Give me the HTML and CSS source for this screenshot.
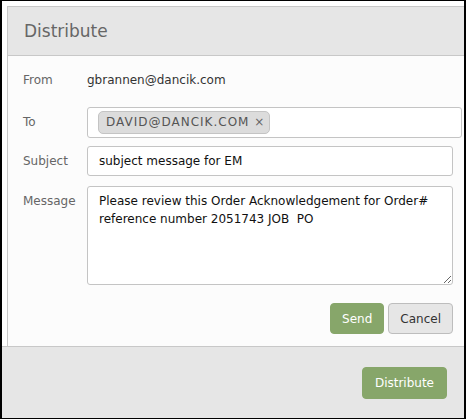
FILE: index.html
```html
<!DOCTYPE html>
<html lang="en">
<head>
    <meta charset="UTF-8">
    <meta name="viewport" content="width=device-width, initial-scale=1.0">
    <title>Distribute</title>
    <link rel="stylesheet" href="styles.css">
</head>
<body>
    <div class="frame">
        <div class="dialog">
            <div class="dialog-header">
                <h2>Distribute</h2>
            </div>
            <div class="dialog-body">
                <form id="distribute-form" class="dist-form">
                    <div class="row row-from">
                        <span class="label">From</span>
                        <span class="from-value">gbrannen@dancik.com</span>
                    </div>
                    <div class="row row-to">
                        <label class="label" for="to-input">To</label>
                        <div class="tag-box">
                            <span class="tag">DAVID@DANCIK.COM <span class="tag-remove">&times;</span></span>
                            <input type="text" id="to-input" class="tag-input">
                        </div>
                    </div>
                    <div class="row row-subject">
                        <label class="label" for="subject">Subject</label>
                        <input type="text" id="subject" class="field" value="subject message for EM">
                    </div>
                    <div class="row row-message">
                        <label class="label" for="message">Message</label>
                        <textarea id="message" class="field field-area">Please review this Order Acknowledgement for Order#
reference number 2051743 JOB  PO</textarea>
                    </div>
                    <div class="actions">
                        <button type="button" class="btn btn-green">Send</button>
                        <button type="button" class="btn btn-default">Cancel</button>
                    </div>
                </form>
            </div>
        </div>
        <div class="dialog-footer">
            <button type="button" class="btn btn-green btn-big">Distribute</button>
        </div>
    </div>
</body>
</html>
```

FILE: styles.css
```css
body {
    margin: 0;
    padding: 0;
    font-family: 'DejaVu Sans', Verdana, sans-serif;
    font-size: 12px;
    background-color: #fff;
}

.frame {
    width: 466px;
    height: 419px;
    box-sizing: border-box;
    border-style: solid;
    border-color: #000;
    border-width: 1px 2px 1px 2px;
    background-color: #fff;
    display: flex;
    flex-direction: column;
}

.dialog {
    margin: 5px 0 0 5px;
    border-left: 1px solid #c8c8c8;
    border-top: 1px solid #c8c8c8;
    flex: 1;
    display: flex;
    flex-direction: column;
}

.dialog-header {
    height: 48px;
    background-color: #e6e6e6;
    border-bottom: 1px solid #c8c8c8;
    display: flex;
    align-items: center;
    padding-left: 16px;
}

.dialog-header h2 {
    margin: 0;
    font-size: 17px;
    font-weight: normal;
    color: #666;
}

.dialog-body {
    flex: 1;
    background-color: #fcfcfc;
    padding: 14px 11px 0 15px;
}

.row {
    display: flex;
    align-items: flex-start;
}

.label {
    width: 64px;
    flex-shrink: 0;
    color: #666;
    line-height: 20px;
}

.row-from {
    line-height: 20px;
    margin-bottom: 17px;
}

.from-value {
    color: #333;
}

.row-to {
    margin-bottom: 8px;
}

.row-to .label,
.row-subject .label {
    line-height: 30px;
}

.row-message .label {
    line-height: 18px;
    padding-top: 6px;
}

.tag-box {
    flex: 1;
    height: 31px;
    box-sizing: border-box;
    border: 1px solid #c4c4c4;
    border-radius: 3px;
    background-color: #fff;
    padding: 2px 10px;
    display: flex;
    align-items: center;
}

.tag {
    display: inline-block;
    height: 23px;
    line-height: 21px;
    box-sizing: border-box;
    padding: 0 5px 0 7px;
    background-color: #dcdcdc;
    border: 1px solid #c4c4c4;
    border-radius: 5px;
    color: #555;
    letter-spacing: 1px;
    white-space: nowrap;
}

.tag-remove {
    color: #666;
    letter-spacing: 0;
}

.tag-input {
    flex: 1;
    border: none;
    outline: none;
    background: transparent;
    min-width: 20px;
}

.field {
    flex: 1;
    height: 30px;
    box-sizing: border-box;
    border: 1px solid #c4c4c4;
    border-radius: 3px;
    background-color: #fff;
    padding: 0 11px;
    font-family: inherit;
    font-size: 12px;
    color: #111;
}

.row-subject {
    margin-bottom: 10px;
}

.field-area {
    height: 99px;
    padding: 5px 11px;
    line-height: 18px;
    resize: vertical;
}

.actions {
    display: flex;
    justify-content: flex-end;
    gap: 4px;
    margin-top: 18px;
}

.btn {
    height: 31px;
    border-radius: 4px;
    font-family: inherit;
    font-size: 12px;
    padding: 0 11px;
    cursor: pointer;
}

.btn-green {
    background-color: #87a66a;
    border: 1px solid #87a66a;
    color: #fff;
}

.btn-default {
    background-color: #e6e6e6;
    border: 1px solid #bdbdbd;
    color: #333;
}

.dialog-footer {
    height: 72px;
    border-top: 1px solid #c8c8c8;
    background-color: #e6e6e6;
    display: flex;
    justify-content: flex-end;
    align-items: flex-start;
    padding: 20px 17px 0 0;
    box-sizing: border-box;
}

.btn-big {
    height: 32px;
    padding: 0 12px;
}
```
